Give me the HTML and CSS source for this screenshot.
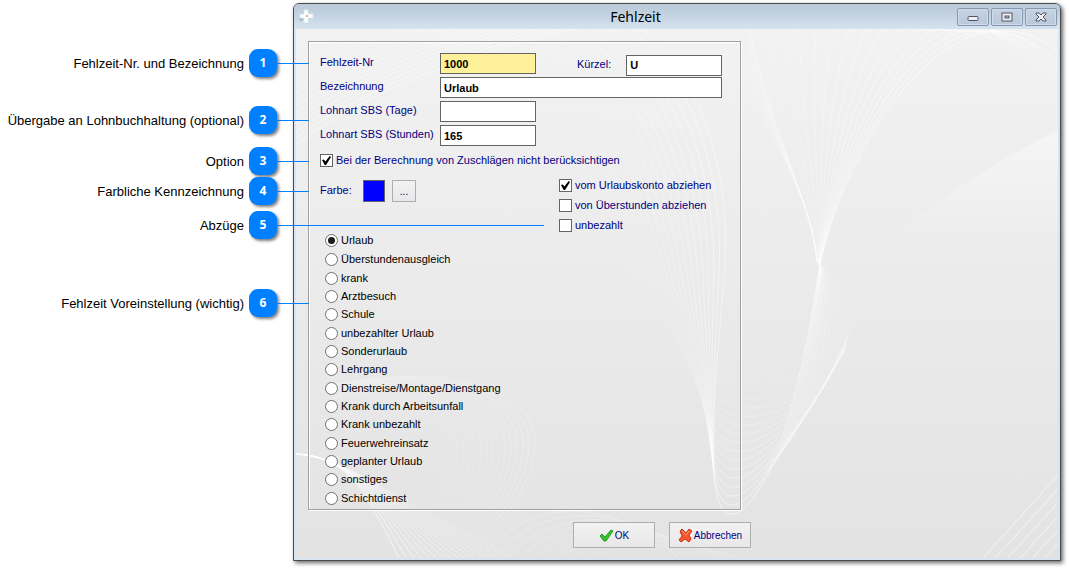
FILE: index.html
```html
<!DOCTYPE html>
<html lang="de">
<head>
<meta charset="utf-8">
<title>Fehlzeit</title>
<link rel="stylesheet" href="styles.css">
</head>
<body>
<main class="figure">
  <ol class="callouts">
    <li class="callout"><span>Fehlzeit-Nr. und Bezeichnung</span><b class="badge">1</b></li>
    <li class="callout after-wide"><span>Übergabe an Lohnbuchhaltung (optional)</span><b class="badge">2</b></li>
    <li class="callout after-medium"><span>Option</span><b class="badge">3</b></li>
    <li class="callout"><span>Farbliche Kennzeichnung</span><b class="badge">4</b></li>
    <li class="callout after-small"><span>Abzüge</span><b class="badge badge-far">5</b></li>
    <li class="callout after-large"><span>Fehlzeit Voreinstellung (wichtig)</span><b class="badge">6</b></li>
  </ol>

  <section class="window">
    <header class="titlebar">
      <svg class="app-icon" width="15" height="16" viewBox="0 0 15 16">
        <path d="M4 3l3-1 1 4 4-1 1 3-4 1 1 4-3 1-1-4-4 1-1-3 4-1z" transform="translate(-1 1)" fill="#a9b5c0"/>
        <path d="M5 1h4v4h5v4H9v5H5V9H1V5h4z" fill="#fff" stroke="#d5ecf6"/>
        <circle cx="8" cy="7" r="1" fill="#f08a50"/>
      </svg>
      <h1 class="title">Fehlzeit</h1>
      <div class="window-buttons">
        <button class="window-button" type="button" aria-label="Minimieren"><svg width="12" height="10" viewBox="0 0 12 10"><rect x="1" y="4.500" width="10" height="4" rx="1" fill="#eee" stroke="#50566a"/></svg></button>
        <button class="window-button" type="button" aria-label="Maximieren"><svg width="12" height="10" viewBox="0 0 12 10"><rect x="1" y="1" width="10" height="8" fill="#eee" stroke="#50566a"/><rect x="4" y="4" width="4" height="2" fill="#b9c9dc" stroke="#50566a"/></svg></button>
        <button class="window-button" type="button" aria-label="Schließen"><svg width="12" height="10" viewBox="0 0 12 10"><path d="M1 1h3l2 2 2-2h3v1L8 5l3 3v1H8L6 7 4 9H1V8l3-3-3-3z" fill="#eee" stroke="#50566a"/></svg></button>
      </div>
    </header>

    <form class="content">
      <svg class="backdrop" viewBox="296 29 762 529" preserveAspectRatio="none" aria-hidden="true">
        <defs>
          <linearGradient id="beam" x1="0" y1="0" x2="0" y2="1">
            <stop offset="0" stop-color="#fff" stop-opacity=".4"/>
            <stop offset="1" stop-color="#fff" stop-opacity="0"/>
          </linearGradient>
        </defs>
        <path d="M1058 130Q960 180 885 241L1058 238z" fill="url(#beam)"/>
        <g class="strands"></g>
      </svg>

      <div class="panel">
        <div class="fields">
          <label for="nr">Fehlzeit-Nr</label>
          <input class="text-input highlighted" id="nr" value="1000">
          <label class="short-label" for="kuerzel">Kürzel:</label>
          <input class="text-input middle" id="kuerzel" value="U">
          <label for="bezeichnung">Bezeichnung</label>
          <input class="text-input wide" id="bezeichnung" value="Urlaub">
          <label class="row-start" for="tage">Lohnart SBS (Tage)</label>
          <input class="text-input" id="tage" value="">
          <label class="row-start" for="stunden">Lohnart SBS (Stunden)</label>
          <input class="text-input" id="stunden" value="165">
        </div>

        <label class="option"><input class="check" type="checkbox" checked>Bei der Berechnung von Zuschlägen nicht berücksichtigen</label>

        <div class="details">
          <div class="colour">
            <span class="colour-label">Farbe:</span>
            <span class="swatch"></span>
            <button class="button more" type="button">...</button>
          </div>
          <div class="deductions">
            <label class="option"><input class="check" type="checkbox" checked>vom Urlaubskonto abziehen</label>
            <label class="option"><input class="check" type="checkbox">von Überstunden abziehen</label>
            <label class="option"><input class="check" type="checkbox">unbezahlt</label>
          </div>
        </div>

        <div class="presets">
          <label class="option"><input class="radio" type="radio" name="preset" checked>Urlaub</label>
          <label class="option"><input class="radio" type="radio" name="preset">Überstundenausgleich</label>
          <label class="option"><input class="radio" type="radio" name="preset">krank</label>
          <label class="option"><input class="radio" type="radio" name="preset">Arztbesuch</label>
          <label class="option"><input class="radio" type="radio" name="preset">Schule</label>
          <label class="option"><input class="radio" type="radio" name="preset">unbezahlter Urlaub</label>
          <label class="option"><input class="radio" type="radio" name="preset">Sonderurlaub</label>
          <label class="option"><input class="radio" type="radio" name="preset">Lehrgang</label>
          <label class="option"><input class="radio" type="radio" name="preset">Dienstreise/Montage/Dienstgang</label>
          <label class="option"><input class="radio" type="radio" name="preset">Krank durch Arbeitsunfall</label>
          <label class="option"><input class="radio" type="radio" name="preset">Krank unbezahlt</label>
          <label class="option"><input class="radio" type="radio" name="preset">Feuerwehreinsatz</label>
          <label class="option"><input class="radio" type="radio" name="preset">geplanter Urlaub</label>
          <label class="option"><input class="radio" type="radio" name="preset">sonstiges</label>
          <label class="option"><input class="radio" type="radio" name="preset">Schichtdienst</label>
        </div>
      </div>

      <div class="actions">
        <button class="button action" type="button">
          <svg width="15" height="14" viewBox="0 0 15 14"><path d="M1 8l2-2 3 3 6-7 2 1-7 10H5z" fill="#36c030" stroke="#2a9a2a"/></svg>OK
        </button>
        <button class="button action" type="button">
          <svg width="15" height="15" viewBox="0 0 15 15"><path d="M2 3l2-2 4 4 3-4 3 2-3 4 2 4-2 3-4-3-4 3-2-2 3-4z" fill="#f8562c" stroke="#c8351a"/><path d="M4 3l4 4 3-4" fill="none" stroke="#ff9a70"/></svg>Abbrechen
        </button>
      </div>
    </form>
  </section>
</main>
<script src="backdrop.js"></script>
</body>
</html>
```

FILE: styles.css
```css
* {
  box-sizing: border-box;
}

body {
  margin: 0;
  background: #fff;
  font: 11px/13px "Liberation Sans", Arial, sans-serif;
  color: #000;
}

.figure {
  display: flex;
  align-items: flex-start;
  padding: 3px 8px 8px 0;
}

.callouts {
  position: relative;
  z-index: 1;
  flex: 0 0 277px;
  margin: 0 16px 0 0;
  padding: 46px 0 0;
  list-style: none;
  font-size: 13px;
}

.callout {
  display: flex;
  align-items: center;
  justify-content: flex-end;
  gap: 5px;
  margin-top: 2px;
}

.callout:first-child {
  margin-top: 0;
}

.after-wide {
  margin-top: 29px;
}

.after-medium {
  margin-top: 13px;
}

.after-small {
  margin-top: 6px;
}

.after-large {
  margin-top: 50px;
}

.badge {
  position: relative;
  width: 28px;
  height: 28px;
  border-radius: 9px;
  background: #0080ff;
  box-shadow: 2px 2px 3px rgba(0, 0, 0, 0.5);
  color: #fff;
  font: bold 12px/28px "Open Sans", sans-serif;
  text-align: center;
}

.badge::after {
  content: "";
  position: absolute;
  top: 14px;
  left: 100%;
  width: 32px;
  height: 1px;
  background: #0080ff;
}

.badge-far::after {
  width: 267px;
}

.window {
  flex: 1;
  border: 1px solid #4a4a4a;
  border-radius: 6px 6px 0 0;
  background: #d8e4f1;
  box-shadow: 2px 2px 4px rgba(0, 0, 0, 0.6);
}

.titlebar {
  display: flex;
  align-items: center;
  justify-content: space-between;
  height: 25px;
  padding: 0 3px 0 5px;
  border-radius: 5px 5px 0 0;
  background: linear-gradient(#b9c9d9, #c5d4e2 50%, #d6e3f1);
}

.title {
  flex: 1;
  margin: 0;
  font: 14px/24px "Noto Sans", sans-serif;
  text-align: center;
}

.window-buttons {
  display: flex;
  gap: 2px;
}

.window-button {
  display: grid;
  place-items: center;
  width: 32px;
  height: 18px;
  padding: 0;
  border: 1px solid #8797ae;
  border-radius: 2px;
  background: linear-gradient(#c5d3e3, #b9c8da);
  box-shadow: inset 0 0 0 1px #d0dcea;
}

.content {
  position: relative;
  margin: 0 2px 2px;
  padding: 12px 12px 10px;
  background: linear-gradient(#f2f2f2, #e3e3e3);
}

.backdrop {
  position: absolute;
  inset: 0;
  width: 100%;
  height: 100%;
}

.strands {
  fill: none;
  stroke: #fff;
}

.panel {
  position: relative;
  width: fit-content;
  padding: 11px 18px 4px 11px;
  border: 1px solid #a0a0a0;
  box-shadow: inset 1px 1px #fff, 1px 1px #fff;
}

.fields {
  display: grid;
  grid-template-columns: 120px 96px 1fr 96px;
  grid-auto-rows: 24px;
  align-items: start;
  color: #000080;
  line-height: 18px;
}

.row-start {
  grid-column: 1;
}

.short-label {
  padding: 2px 15px 0 41px;
}

.text-input {
  width: 100%;
  height: 21px;
  padding: 0 3px;
  border: 1px solid #646464;
  border-radius: 0;
  background: #fff;
  color: #000;
  font: bold 11px "Liberation Sans", Arial, sans-serif;
}

.highlighted {
  background: #fff09a;
}

.middle {
  align-self: center;
}

.wide {
  grid-column: 2 / -1;
}

.panel > .option {
  margin-top: 5px;
}

.option {
  display: flex;
  align-items: center;
  gap: 3px;
  color: #000080;
}

.check,
.radio {
  appearance: none;
  display: grid;
  place-items: center;
  flex: none;
  width: 13px;
  height: 13px;
  margin: 0;
  border: 1px solid #646464;
  background: #fff;
}

.check:checked::before {
  content: "";
  width: 9px;
  height: 9px;
  background: #000;
  clip-path: polygon(0 45%, 20% 40%, 38% 62%, 85% 0, 100% 10%, 45% 100%, 30% 100%);
}

.radio {
  border-color: #707070;
  border-radius: 50%;
}

.radio:checked::before {
  content: "";
  width: 7px;
  height: 7px;
  border-radius: 50%;
  background: #1c1c1c;
}

.details {
  display: grid;
  grid-template-columns: 239px 1fr;
  margin-top: 12px;
}

.colour {
  display: flex;
  align-items: flex-start;
  gap: 7px;
  padding-top: 1px;
  color: #000080;
}

.colour-label {
  width: 36px;
  line-height: 20px;
}

.swatch {
  width: 22px;
  height: 22px;
  border: 1px solid #646464;
  background: #00f;
}

.button {
  border: 1px solid #adadad;
  border-radius: 0;
  background: linear-gradient(#f2f2f2, #e8e8e8);
  color: #000080;
  font: 10px "Liberation Sans", Arial, sans-serif;
}

.more {
  width: 24px;
  height: 22px;
  padding: 0;
}

.deductions {
  display: grid;
  gap: 7px;
}

.presets {
  display: flex;
  flex-direction: column;
  gap: 5px;
  margin-top: 2px;
  padding-left: 5px;
}

.presets .option {
  color: #000;
}

.presets .option:first-child {
  margin-bottom: 1px;
}

.presets .option:nth-child(3n) {
  margin-top: 1px;
}

.actions {
  position: relative;
  display: flex;
  justify-content: center;
  gap: 14px;
  margin-top: 12px;
  padding-right: 30px;
}

.action {
  display: flex;
  align-items: center;
  justify-content: center;
  gap: 1px;
  width: 82px;
  height: 26px;
  padding: 0;
}
```

FILE: backdrop.js
```js
// Each family blends one curve into another over a number of thin strands.
const families = [
  // upper fan, opening from the neck towards the title bar
  { count: 16, from: 0.6, to: 0.15, a: "M820 265 C842 160 920 33 998 31 C1030 31 1045 40 1058 52", b: "M817 262 C812 200 770 130 750 29 C750 20 750 10 750 0" },
  { count: 12, from: 0.3, to: 0.05, a: "M817 262 C812 200 775 150 750 29", b: "M817 262 C812 200 770 130 740 90" },
  // left fan, falling to the nested arcs
  { count: 18, from: 0.45, to: 0.1, a: "M600 0 C712 60 734 190 723 290 C718 350 712 400 714 475", b: "M440 0 C560 100 600 220 640 285 C670 330 700 370 710 440" },
  { count: 17, from: 0.55, to: 0.1, a: "M714 475 C718 535 745 520 770 470", b: "M700 350 C720 370 760 378 800 376" },
  // right side, between the neck and the arcs
  { count: 18, from: 0.5, to: 0.12, a: "M820 265 C810 330 795 410 770 470", b: "M820 265 C845 275 855 330 845 350 C815 400 790 440 770 470".replace(/ C815.*/, "") },
  { count: 8, from: 0.45, to: 0.1, a: "M845 350 C820 395 790 440 770 470", b: "M849 330 C830 385 800 420 785 440" },
  { count: 12, from: 0.4, to: 0.05, a: "M990 30 C1020 32 1045 50 1060 62", b: "M990 30 C1010 50 1040 80 1060 110" },
  { count: 6, from: 0.6, to: 0.6, a: "M983 558 L1060 473", b: "M1045 558 L1122 473" },
  { count: 14, from: 0.5, to: 0.15, a: "M296 144 C370 90 480 45 620 20", b: "M296 60 C350 40 400 30 440 20" },
  { count: 18, from: 0.6, to: 0.15, a: "M296 454 C350 455 370 500 400 560", b: "M296 454 C360 460 400 510 530 560" },
  { count: 16, from: 0.25, to: 0.08, a: "M465 560 C530 500 560 430 510 400 C470 375 410 370 330 385", b: "M390 560 C430 520 460 460 440 430 C410 400 360 390 330 400" },
  { count: 9, from: 0.25, to: 0.15, a: "M480 560 C530 490 620 500 680 560", b: "M580 560 C630 540 700 540 740 560" }
];

const group = document.querySelector(".strands");
const numbers = (d) => d.match(/-?\d+/g).map(Number);

for (const { count, from, to, a, b } of families) {
  const target = numbers(b);
  const start = numbers(a);
  for (let i = 0; i < count; i++) {
    const t = i / (count - 1);
    let k = 0;
    const d = a.replace(/-?\d+/g, () => {
      const v = start[k] + (target[k] - start[k]) * t;
      k++;
      return v.toFixed(1);
    });
    const path = document.createElementNS("http://www.w3.org/2000/svg", "path");
    path.setAttribute("d", d);
    path.setAttribute("stroke-opacity", (from + (to - from) * t).toFixed(2));
    group.append(path);
  }
}
```
